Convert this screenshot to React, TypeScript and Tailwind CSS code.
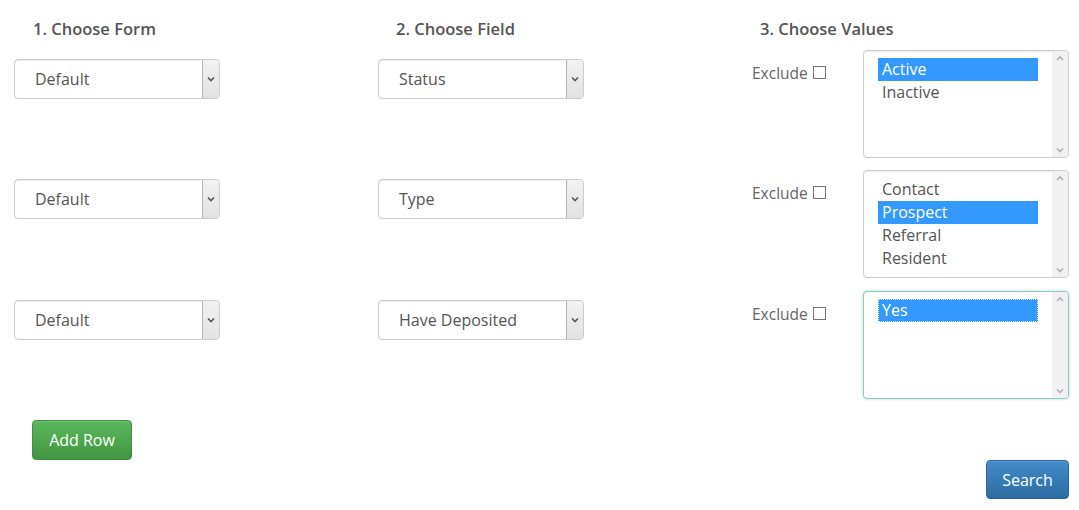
import React from 'react';

type Row = {
  form: string;
  field: string;
  options: string[];
  selected: string;
  focused?: boolean;
};

const rows: Row[] = [
  { form: 'Default', field: 'Status', options: ['Active', 'Inactive'], selected: 'Active' },
  { form: 'Default', field: 'Type', options: ['Contact', 'Prospect', 'Referral', 'Resident'], selected: 'Prospect' },
  { form: 'Default', field: 'Have Deposited', options: ['Yes'], selected: 'Yes', focused: true },
];

function Chevron({ up = false, className = '' }: { up?: boolean; className?: string }) {
  return (
    <svg width="8" height="6" viewBox="0 0 8 6" className={className}>
      <path
        d={up ? 'M1 5 L4 2 L7 5' : 'M1 1.5 L4 4.5 L7 1.5'}
        fill="none"
        stroke="currentColor"
        strokeWidth="1.6"
      />
    </svg>
  );
}

function FakeSelect({ value }: { value: string }) {
  return (
    <div className="flex h-[40px] w-[206px] items-stretch rounded-[4px] border border-[#cccccc] bg-white shadow-[inset_0_1px_1px_rgba(0,0,0,0.075)]">
      <div className="flex flex-1 items-center pl-[20px] text-[16px] text-[#555555]">{value}</div>
      <div className="flex w-[17px] items-center justify-center rounded-r-[3px] border-l border-[#b5b5b5] bg-gradient-to-b from-[#f2f2f2] to-[#e2e2e2] text-[#555555]">
        <Chevron />
      </div>
    </div>
  );
}

function ListBox({ options, selected, focused }: { options: string[]; selected: string; focused?: boolean }) {
  return (
    <div
      className={
        'flex h-[108px] w-[206px] rounded-[4px] border bg-white ' +
        (focused
          ? 'border-[#8ccbbf] shadow-[0_0_3px_rgba(102,175,160,0.5)]'
          : 'border-[#cccccc] shadow-[inset_0_1px_1px_rgba(0,0,0,0.075)]')
      }
    >
      <div className="flex flex-1 flex-col pl-[14px] pr-[14px] pt-[7px]">
        {options.map((o) => (
          <div
            key={o}
            className={
              'h-[23px] pl-[4px] text-[16px] leading-[23px] ' +
              (o === selected ? 'bg-[#3399ff] text-white' : 'text-[#555555]') +
              (o === selected && focused ? ' outline-1 outline-dotted outline-[#e0eeff] -outline-offset-1' : '')
            }
          >
            {o}
          </div>
        ))}
      </div>
      <div className="flex w-[16px] flex-col items-center justify-between rounded-r-[3px] bg-[#f1f1f1] py-[4px] text-[#b0b0b0]">
        <Chevron up />
        <Chevron />
      </div>
    </div>
  );
}

export default function App() {
  return (
    <div className="w-[1079px] h-[510px] bg-white font-['Open_Sans',sans-serif] text-[#555555]">
      <div className="flex h-[50px] pt-[19px] text-[16.5px] font-semibold leading-[20px]">
        <div className="w-[378px] pl-[33px]">1. Choose Form</div>
        <div className="w-[364px] pl-[18px]">2. Choose Field</div>
        <div className="pl-[18px]">3. Choose Values</div>
      </div>

      <div className="flex flex-col gap-[12px]">
        {rows.map((r, i) => (
          <div key={i} className={'flex h-[108px]' + (i === 2 ? ' mt-[1px]' : '')}>
            <div className="w-[378px] pl-[14px] pt-[9px]">
              <FakeSelect value={r.form} />
            </div>
            <div className="w-[364px] pt-[9px]">
              <FakeSelect value={r.field} />
            </div>
            <div className="flex pl-[10px]">
              <label className="flex w-[111px] items-start gap-[5px] pt-[13px] text-[15.5px] text-[#666666]">
                <span className="leading-[20px]">Exclude</span>
                <span className="mt-[3px] h-[13px] w-[13px] border border-[#767676] bg-white" />
              </label>
              <ListBox options={r.options} selected={r.selected} focused={r.focused} />
            </div>
          </div>
        ))}
      </div>

      <div className="flex pl-[32px] pt-[21px]">
        <button className="h-[40px] w-[100px] rounded-[4px] border border-[#3e8f3e] bg-gradient-to-b from-[#5cb85c] to-[#419641] text-[16px] text-white shadow-[inset_0_1px_0_rgba(255,255,255,0.15)]">
          Add Row
        </button>
      </div>
      <div className="flex justify-end pr-[10px]">
        <button className="h-[39px] w-[83px] rounded-[4px] border border-[#2b669a] bg-gradient-to-b from-[#428bca] to-[#2d6ca2] text-[16px] text-white shadow-[inset_0_1px_0_rgba(255,255,255,0.15)]">
          Search
        </button>
      </div>
    </div>
  );
}
